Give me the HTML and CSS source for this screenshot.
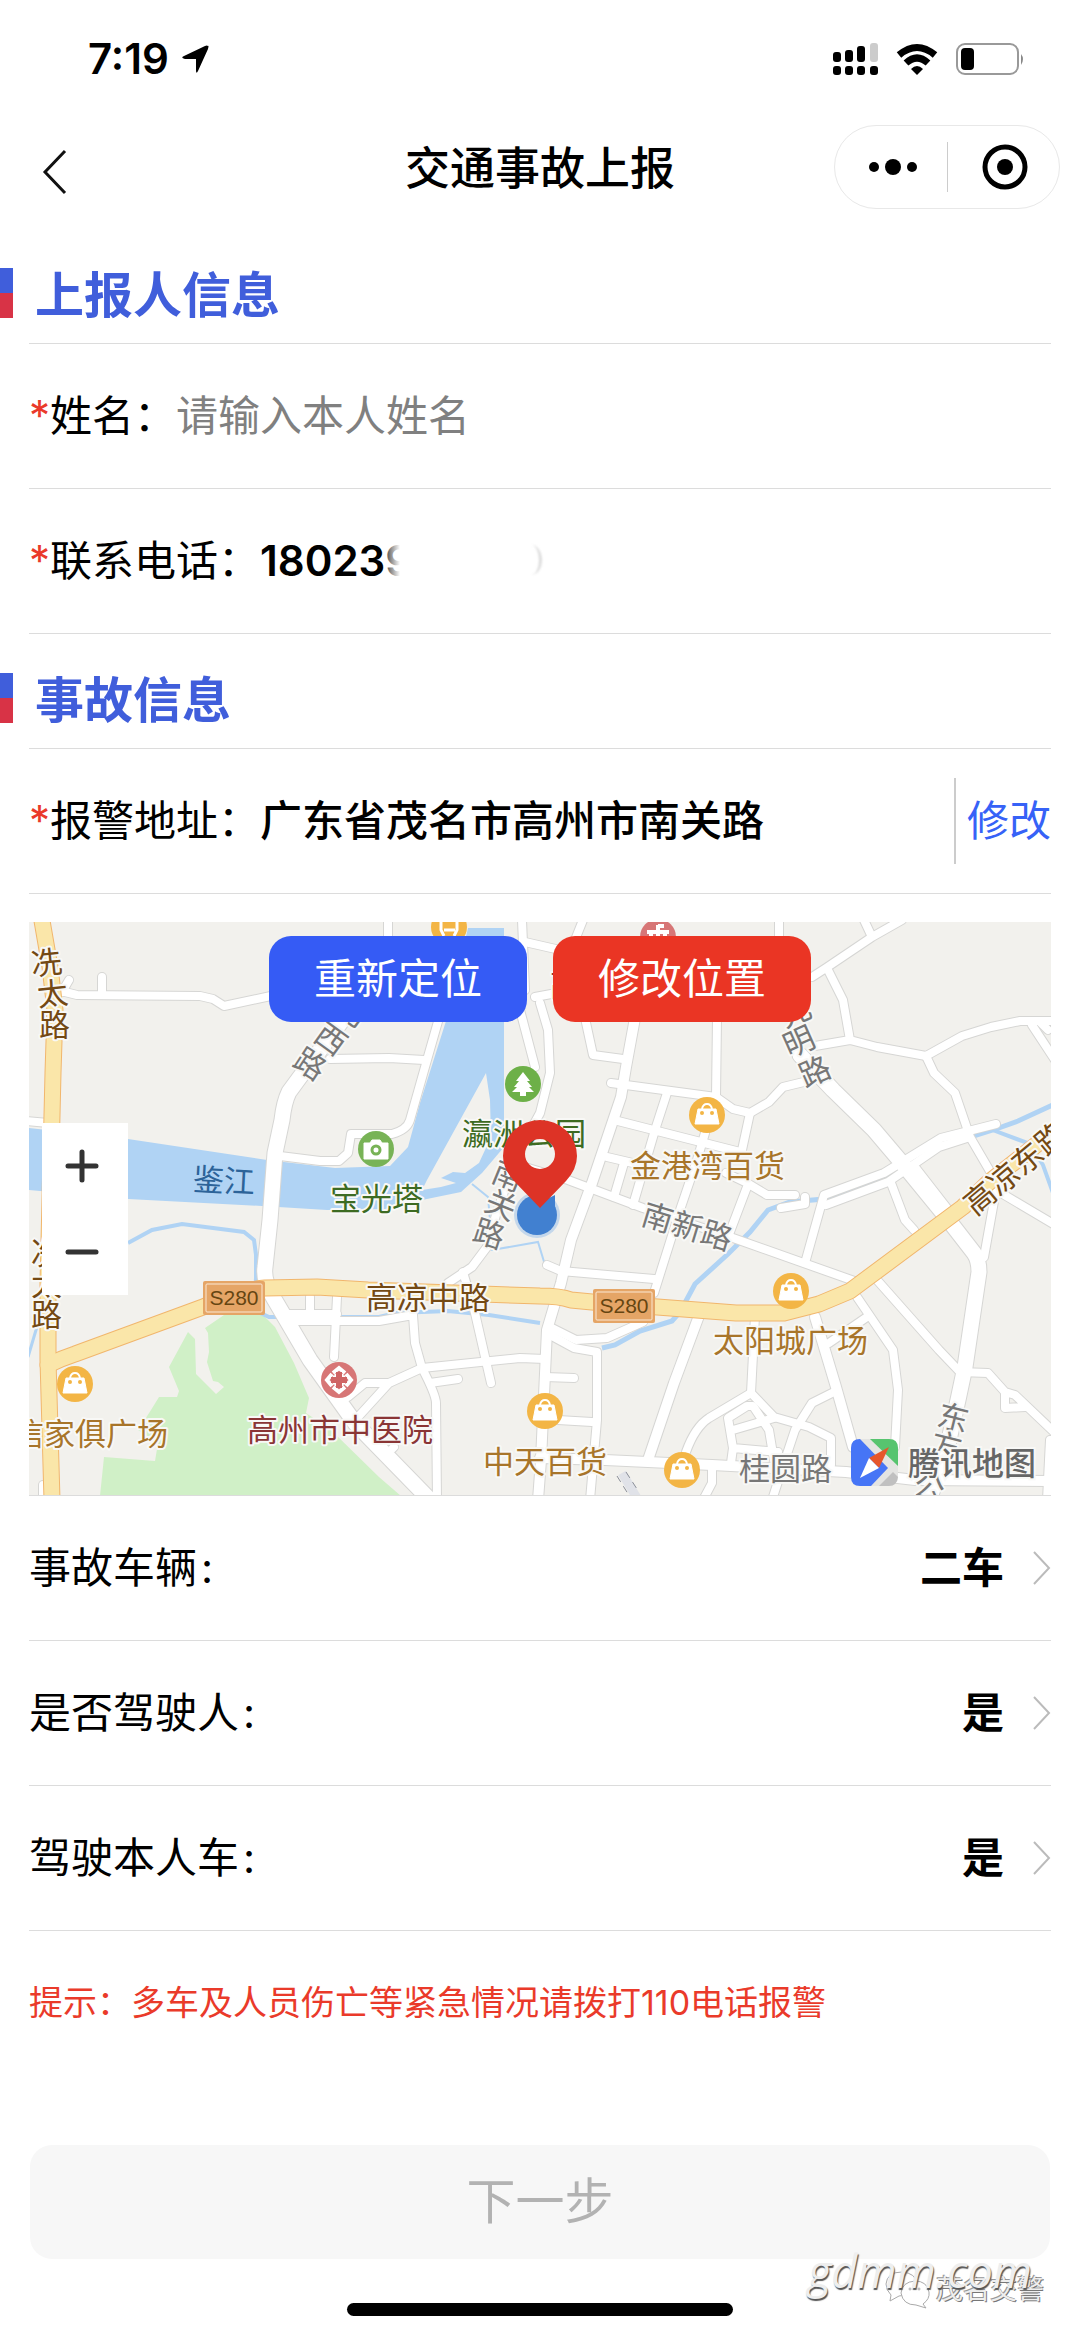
FILE: index.html
```html
<!DOCTYPE html>
<html lang="zh-CN">
<head>
  <meta charset="UTF-8" />
  <meta name="viewport" content="width=device-width, initial-scale=1.0" />
  <title>交通事故上报</title>
  <link rel="stylesheet" href="styles.css">
</head>
<body>
  <div class="status-bar">
    <div class="clock">
      <span>7:19</span>
      <svg width="28" height="28" viewBox="0 0 28 28"><path d="M27 1 Q28 0 27 4 L17 26 Q15 30 15 25 V14 H4 Q-1 13 3 11 L24 1 Q26 0 27 1Z"/></svg>
    </div>
    <div class="status-icons">
      <svg width="45" height="34" viewBox="0 0 45 34">
        <rect x="0" y="10" width="8" height="10" rx="3"/>
        <rect x="12" y="8" width="8" height="12" rx="3"/>
        <rect x="24" y="4" width="8" height="16" rx="3"/>
        <rect x="37" y="1" width="8" height="19" rx="3" fill="#ccc"/>
        <rect x="0" y="24" width="8" height="9" rx="3"/>
        <rect x="12" y="24" width="8" height="9" rx="3"/>
        <rect x="24" y="24" width="8" height="9" rx="3"/>
        <rect x="37" y="24" width="8" height="9" rx="3"/>
      </svg>
      <svg width="42" height="34" viewBox="0 0 42 34">
        <g fill="none" stroke="#000" stroke-width="7">
          <path d="M3 13 Q21 -2 39 13"/>
          <path d="M10 21 Q21 11 32 21"/>
        </g>
        <path d="M15 27 Q21 21 27 27 L21 33Z"/>
      </svg>
      <svg width="70" height="34" viewBox="0 0 70 34">
        <rect x="1" y="2" width="61" height="30" rx="8" fill="none" stroke="#999" stroke-width="2"/>
        <rect x="5" y="6" width="13" height="22" rx="4"/>
        <path d="M65 12 Q69 17 65 23Z" fill="#888"/>
      </svg>
    </div>
  </div>

  <header class="nav-bar">
    <button class="back" type="button" aria-label="返回">
      <svg width="26" height="46" viewBox="0 0 26 46"><path d="M23 2 L3 23 L23 44" fill="none" stroke="#111" stroke-width="3"/></svg>
    </button>
    <h1>交通事故上报</h1>
    <div class="capsule">
      <button type="button" aria-label="更多">
        <svg width="50" height="18" viewBox="0 0 50 18"><circle cx="6" cy="9" r="5"/><circle cx="25" cy="9" r="8"/><circle cx="44" cy="9" r="5"/></svg>
      </button>
      <button type="button" aria-label="关闭">
        <svg width="46" height="46" viewBox="0 0 46 46"><circle cx="23" cy="23" r="20" fill="none" stroke="#000" stroke-width="5"/><circle cx="23" cy="23" r="8"/></svg>
      </button>
    </div>
  </header>

  <form class="report-form">
    <h2>上报人信息</h2>
    <div class="row">
      <label for="name"><i>*</i>姓名：</label>
      <input type="text" id="name" name="name" placeholder="请输入本人姓名" />
    </div>
    <div class="row">
      <label for="phone"><i>*</i>联系电话：</label>
      <div class="phone-box">
        <input class="phone" type="tel" id="phone" name="phone" value="180239" />
        <span class="smudge"></span>
      </div>
    </div>

    <h2>事故信息</h2>
    <div class="row">
      <label for="address"><i>*</i>报警地址：</label>
      <input class="address" type="text" id="address" name="address" value="广东省茂名市高州市南关路" readonly />
      <a class="edit" href="#map">修改</a>
    </div>

    <div class="map" id="map">
      <svg class="map-canvas" viewBox="29 922 1022 573">
        <defs>
          <g id="minor">
            <path d="M65 992 L77 995 L200 996 L213 999 L224 1006 L280 994"/>
            <path d="M102 977 V992 M69 980 L62 992 M25 1121 L48 1123"/>
            <path d="M330 1059 L389 1058 L424 1060"/>
            <path d="M388 920 V945 M522 920 L525 990"/>
            <path d="M439 1018 L425 1067 L410 1120 Q407 1130 392 1134 L351 1134 L348 1153 L339 1161 L320 1161 L280 1156"/>
            <path d="M520 1010 L535 1067 M540 1003 L548 1030 L550 1073 L540 1113 L520 1150 L508 1180 L496 1215 L487 1247 L472 1267 L448 1283"/>
            <path d="M525 942 L560 950 M583 920 L573 945 M535 997 L562 992 M779 920 V945"/>
            <path d="M585 1018 L593 1055 L623 1059"/>
            <path d="M717 1018 L716 1097 L733 1109 L750 1113 L769 1102 L783 1087 L812 1080"/>
            <path d="M611 1083 L716 1097 M750 1113 L742 1150"/>
            <path d="M667 1093 L655 1130 L633 1205 M614 1120 L740 1152 M607 1157 L650 1167 M624 1163 L614 1197"/>
            <path d="M525 1167 L568 1180 L643 1208 L733 1238 L860 1283"/>
            <path d="M705 1133 L697 1160 L681 1207 L654 1293"/>
            <path d="M726 1173 L747 1183 L767 1195 H795 M747 1187 L728 1237"/>
            <path d="M805 1197 V1204 L781 1208"/>
            <path d="M805 1263 L824 1195 L884 1173 L941 1138 L996 1124"/>
            <path d="M826 1205 L888 1182 L939 1147 L967 1138"/>
            <path d="M812 977 L826 968 L872 937 L902 920 M864 920 L872 937"/>
            <path d="M827 968 L843 1000 L850 1040 M815 1046 L850 1040 L877 1047 L926 1056 L962 1036 L991 1027 L1020 1021 H1050 M1040 1022 L1048 1030"/>
            <path d="M1032 1025 L1055 1060"/>
            <path d="M926 1056 L934 1073 L955 1093 L970 1137 L991 1173 L996 1190 L1055 1225"/>
            <path d="M996 1190 L984 1257 M915 1167 L950 1212 M891 1183 L905 1220 L914 1230"/>
            <path d="M547 1265 L561 1271 L654 1279"/>
            <path d="M550 1327 L576 1340 L607 1338 L643 1322"/>
            <path d="M550 1335 L574 1348 L597 1352 V1420 L590 1500"/>
            <path d="M545 1377 L574 1378 M558 1420 L592 1422"/>
            <path d="M755 1316 L751 1393 L774 1417 L809 1427 L831 1438 V1465"/>
            <path d="M751 1393 L709 1418 Q695 1427 686 1452"/>
            <path d="M731 1463 L733 1448 L728 1418 L747 1406 H753 L769 1430 L774 1460 M733 1430 L774 1418 M733 1448 L778 1452"/>
            <path d="M834 1392 L812 1403 L795 1430 L786 1457 L772 1500"/>
            <path d="M712 1468 V1483 L703 1500"/>
            <path d="M857 1297 L893 1350 L898 1390 L895 1447 M867 1317 L829 1343"/>
            <path d="M877 1280 L939 1350 L960 1372 L988 1373 L1005 1392 L1015 1395 L1055 1433 M1005 1392 V1408 L1025 1407"/>
            <path d="M1050 1440 L1047 1500"/>
            <path d="M310 1297 V1314 M337 1297 L334 1357 M289 1314 H337"/>
            <path d="M293 1321 H379 L413 1315 L415 1343 L422 1368 Q436 1395 436 1403 L437 1500"/>
            <path d="M348 1397 L365 1383 H389 L422 1368 L520 1358 L545 1359 M389 1383 L358 1417 M430 1383 L458 1379"/>
            <path d="M463 1272 L475 1313 L491 1383 M389 1452 L394 1447"/>
            <path d="M43 1500 V1485"/>
          </g>
          <g id="middle">
            <path d="M635 1018 L626 1067 L621 1097 L592 1183 L571 1240 L561 1283 L547 1330 L541 1460 L538 1500"/>
            <path d="M700 1313 L674 1383 L648 1460"/>
            <path d="M815 1317 L836 1387 L853 1447"/>
            <path d="M540 1458 L605 1460 L712 1465 L846 1472 L915 1480 L1055 1481"/>
          </g>
          <g id="major">
            <path d="M344 1018 L300 1077 L289 1092 Q284 1102 282 1120 L275 1153 L270 1220 L265 1267 Q263 1280 273 1297 L310 1360 L355 1423 L432 1502"/>
            <path d="M800 1055 L833 1090 L874 1130 L902 1163 L943 1213 L974 1253 Q979 1260 979 1272 L965 1367 L958 1400 L946 1453 L929 1500"/>
          </g>
          <g id="highway">
            <path d="M41 915 L50 967 L55 1010 L53 1073 L48 1283 V1360 L52 1500"/>
            <path d="M48 1365 Q60 1359 75 1354 L203 1307 Q240 1290 265 1288 L317 1287 L368 1290 L540 1296 Q560 1296 571 1300 L592 1302 L736 1313 H784 L819 1304 L850 1291 L963 1207 L988 1183 L1055 1130"/>
          </g>
          <g id="bag">
            <circle r="18" fill="#f3b545"/>
            <path d="M-9 -6 H9 L12 9 H-12Z" fill="#fff" stroke="#fff" stroke-width="1" stroke-linejoin="round"/>
            <path d="M-5 -6 Q-4 -11 0 -11 Q4 -11 5 -6" fill="none" stroke="#fff" stroke-width="2"/>
            <circle cx="-5" cy="-2" r="2" fill="#f3b545"/><circle cx="5" cy="-2" r="2" fill="#f3b545"/>
          </g>
        </defs>

        <rect x="29" y="922" width="1022" height="573" fill="#f2f1ed"/>

        <!-- park and water -->
        <path fill="#d0f0c7" d="M224 1315 H263 L275 1327 L294 1363 L309 1398 L306 1413 L331 1430 L379 1477 L401 1496 H100 L104 1457 L155 1461 L158 1443 L138 1430 L151 1410 L159 1397 H177 L179 1391 L169 1367 L188 1332 L195 1339 L196 1374 L216 1394 L224 1387 L218 1382 L213 1381 L207 1362 L209 1352 L208 1333 L205 1328Z"/>
        <path fill="#b0d3f4" d="M28 1128 L128 1139 L267 1160 L335 1168 L390 1166 L408 1147 L420 1103 L446 1021 L468 928 H504 V1147 L482 1173 L461 1192 L422 1200 L385 1209 L327 1210 L262 1206 L128 1199 L28 1190Z"/>
        <path fill="#f2f1ed" d="M486 1073 L427 1180 L422 1190 L441 1187 L456 1183 L441 1178 L453 1172 L465 1173 L479 1163 L491 1137 L490 1100Z"/>
        <g class="stream">
          <path d="M472 1184 L488 1197 L490 1220 L485 1245 L492 1250 L538 1242 L545 1265" stroke-width="2"/>
          <path d="M128 1243 L152 1230 L182 1224 L244 1232 L254 1240 L256 1255 V1278 L254 1310 L269 1317 H379 L396 1313 L448 1311 L489 1315 L540 1323" stroke-width="4"/>
          <path d="M28 1357 L36 1330 L48 1290" stroke-width="3"/>
          <path d="M1055 1104 L1018 1121 L996 1129 L967 1138 L941 1142 L888 1178 L824 1199 L790 1202 L768 1210 L750 1232 L728 1254 L695 1284 L680 1312 L672 1321 L640 1331 L615 1345 L602 1348" stroke-width="5"/>
          <path d="M990 1129 L1030 1144 L1043 1165 L1053 1193" stroke-width="4"/>
        </g>

        <!-- roads: outline first, then the road itself -->
        <use href="#minor" class="road edge-minor"/>
        <use href="#middle" class="road edge-middle"/>
        <use href="#major" class="road edge-major"/>
        <use href="#minor" class="road fill-minor"/>
        <use href="#middle" class="road fill-middle"/>
        <use href="#major" class="road fill-major"/>
        <use href="#highway" class="road edge-highway"/>
        <use href="#highway" class="road fill-highway"/>

        <path d="M622 1473 L637 1498" stroke="#e0e2e8" stroke-width="9"/>
        <path d="M617 1476 L630 1497 M626 1472 L637 1489" stroke="#8b8f99" stroke-width="1" stroke-dasharray="7 5"/>

        <!-- places -->
        <use href="#bag" x="707" y="1115"/>
        <use href="#bag" x="75" y="1384"/>
        <use href="#bag" x="791" y="1291"/>
        <use href="#bag" x="545" y="1411"/>
        <use href="#bag" x="682" y="1470"/>
        <circle cx="449" cy="927" r="18" fill="#f3b545"/>
        <path d="M441 920 V930 L444 936 M444 930 H455 M457 920 V930 L454 936" fill="none" stroke="#fff" stroke-width="3"/>
        <circle cx="658" cy="937" r="18" fill="#d77676"/>
        <path d="M658 925 V936 M658 926 H664 M647 932 H669 M651 933 V942 M665 933 V942" stroke="#fff" stroke-width="4"/>
        <circle cx="376" cy="1149" r="18" fill="#78b356"/>
        <path d="M364 1143 H370 L372 1140 H380 L382 1143 H388 V1159 H364Z" fill="#fff" stroke="#fff" stroke-linejoin="round"/>
        <circle cx="376" cy="1150" r="4" fill="#fff" stroke="#78b356" stroke-width="3"/>
        <circle cx="523" cy="1084" r="18" fill="#6db048"/>
        <path d="M523 1072 L530 1081 H527 L532 1087 H529 L534 1092 H526 V1096 H520 V1092 H512 L517 1087 H514 L519 1081 H516Z" fill="#fff"/>
        <circle cx="339" cy="1380" r="18" fill="#d77676"/>
        <g fill="none" stroke="#fff" stroke-width="4">
          <path d="M333 1373 L339 1368 L345 1373 M346 1374 L351 1380 L346 1386 M345 1387 L339 1392 L333 1387 M332 1386 L327 1380 L332 1374"/>
        </g>
        <path d="M339 1374 V1386 M333 1380 H345" stroke="#fff" stroke-width="9"/>
        <path d="M339 1372 V1388 M331 1380 H347" stroke="#cf6464" stroke-width="6"/>

        <g class="badge">
          <rect x="203" y="1281" width="62" height="34" rx="2"/><rect class="inner" x="206" y="1284" width="56" height="28" rx="1"/>
          <text x="234" y="1305">S280</text>
          <rect x="593" y="1289" width="62" height="34" rx="2"/><rect class="inner" x="596" y="1292" width="56" height="28" rx="1"/>
          <text x="624" y="1313">S280</text>
        </g>

        <!-- labels -->
        <g class="names">
          <g class="street-main">
            <text x="31" y="974" transform="rotate(-6 47 962)">冼</text>
            <text x="37" y="1005" transform="rotate(-6 53 993)">太</text>
            <text x="39" y="1036">路</text>
            <text x="31" y="1264">冼</text>
            <text x="31" y="1295">太</text>
            <text x="31" y="1326">路</text>
            <text x="366" y="1309">高凉中路</text>
            <text x="964" y="1210" transform="rotate(-40 979 1198)">高凉东路</text>
          </g>
          <g class="street">
            <text x="338" y="1022" transform="rotate(36 353 1010)">河</text>
            <text x="316" y="1050" transform="rotate(36 331 1038)">西</text>
            <text x="295" y="1075" transform="rotate(33 310 1063)">路</text>
            <text x="493" y="1187" transform="rotate(22 508 1175)">南</text>
            <text x="486" y="1216" transform="rotate(22 501 1204)">关</text>
            <text x="474" y="1245" transform="rotate(18 489 1233)">路</text>
            <text x="779" y="1023" transform="rotate(-24 794 1011)">光</text>
            <text x="783" y="1053" transform="rotate(-24 798 1041)">明</text>
            <text x="799" y="1083" transform="rotate(-24 814 1071)">路</text>
            <text x="641" y="1238" transform="rotate(17 688 1226)">南新路</text>
            <text x="739" y="1480">桂圆路</text>
            <text x="938" y="1429" transform="rotate(14 953 1417)">东</text>
            <text x="931" y="1457" transform="rotate(14 946 1445)">方</text>
            <text x="914" y="1499" transform="rotate(14 929 1487)">公</text>
          </g>
          <text class="river" x="193" y="1192" transform="rotate(3 224 1180)">鉴江</text>
          <text class="park" x="330" y="1210">宝光塔</text>
          <text class="park" x="462" y="1145">瀛洲公园</text>
          <text class="shop" x="630" y="1177">金港湾百货</text>
          <text class="shop" x="713" y="1352">太阳城广场</text>
          <text class="shop" x="13" y="1445">信家俱广场</text>
          <text class="shop" x="483" y="1473">中天百货</text>
          <text class="hospital" x="247" y="1441">高州市中医院</text>
          <text class="hospital" x="550" y="996">高</text>
        </g>

        <!-- map logo -->
        <svg x="851" y="1439" width="47" height="47" viewBox="0 0 47 47">
          <rect width="47" height="47" rx="9" fill="#e4e4e2"/>
          <path d="M9 0 L37 29 L20 47 H9 Q0 47 0 38 V9 Q0 0 9 0Z" fill="#4675f6"/>
          <path d="M19 0 H38 Q47 0 47 9 V27Z" fill="#57c46f"/>
          <path d="M28 47 L42 33 L47 38 Q46 47 38 47Z" fill="#c0c0c0"/>
          <path d="M38 8 L18 19 L28 29Z" fill="#e6572c"/>
          <path d="M9 39 L18 19 L28 29Z" fill="#fff"/>
        </svg>
        <text class="brand" x="908" y="1475">腾讯地图</text>

        <!-- current position -->
        <circle cx="537" cy="1215" r="23" fill="#5a9be8" opacity="0.3"/>
        <circle cx="537" cy="1215" r="20" fill="#4180d0"/>
        <path d="M543 1201 L555 1195 V1208Z" fill="#4180d0"/>
        <path fill="#dd3326" fill-rule="evenodd" d="M540 1208 L514 1181 Q503 1169 503 1156 A37 36 0 0 1 577 1156 Q577 1169 566 1181Z M540 1139 A15 15 0 1 0 540 1169 A15 15 0 1 0 540 1139Z"/>
      </svg>
      <div class="map-actions">
        <button class="locate" type="button">重新定位</button>
        <button class="move" type="button">修改位置</button>
      </div>
      <div class="zoom">
        <button type="button" aria-label="放大"><svg width="34" height="34" viewBox="0 0 34 34"><path d="M3 17 H31 M17 3 V31"/></svg></button>
        <button type="button" aria-label="缩小"><svg width="34" height="34" viewBox="0 0 34 34"><path d="M3 17 H31"/></svg></button>
      </div>
    </div>

    <div class="row">
      <label for="cars">事故车辆<b>:</b></label>
      <select id="cars" name="cars"><option>二车</option><option>单车</option></select>
      <svg class="arrow" width="18" height="34" viewBox="0 0 18 34"><path d="M1 1 L16 17 L1 33"/></svg>
    </div>
    <div class="row">
      <label for="driver">是否驾驶人<b>:</b></label>
      <select id="driver" name="driver"><option>是</option><option>否</option></select>
      <svg class="arrow" width="18" height="34" viewBox="0 0 18 34"><path d="M1 1 L16 17 L1 33"/></svg>
    </div>
    <div class="row">
      <label for="own-car">驾驶本人车<b>:</b></label>
      <select id="own-car" name="own-car"><option>是</option><option>否</option></select>
      <svg class="arrow" width="18" height="34" viewBox="0 0 18 34"><path d="M1 1 L16 17 L1 33"/></svg>
    </div>

    <p class="tip">提示：多车及人员伤亡等紧急情况请拨打110电话报警</p>
    <button class="next" type="submit" disabled>下一步</button>
  </form>

  <footer>
    <div class="home-indicator"></div>
    <div class="account">
      <svg width="46" height="40" viewBox="0 0 46 40" fill="#fff" stroke="#aaa">
        <path d="M6 25 Q1 20 1 14 Q2 2 17 2 Q31 3 32 14 Q30 25 14 26 L5 31Z"/>
        <path d="M38 34 Q45 29 44 22 Q42 11 30 11 Q17 12 16 23 Q18 35 31 35 L41 38Z"/>
        <circle cx="25" cy="19" r="1"/><circle cx="34" cy="19" r="1"/>
      </svg>
      <span>茂名交警</span>
    </div>
    <div class="site">gdmm.com</div>
  </footer>
</body>
</html>
```
FILE: styles.css
```css
* { box-sizing: border-box; }
body { margin: 0; background: #fff; color: #000; font-family: Inter, "Noto Sans CJK SC", sans-serif; font-size: 42px; line-height: 60px; }
h1, h2, p { margin: 0; }
button, input, select { font: inherit; color: inherit; margin: 0; padding: 0; border: none; background: none; }
button { cursor: pointer; }
svg { display: block; }

/* status bar */
.status-bar { display: flex; justify-content: space-between; align-items: center; height: 118px; padding: 0 54px 0 88px; }
.clock { display: flex; align-items: center; gap: 12px; font-size: 42px; font-weight: 600; }
.status-icons { display: flex; align-items: center; gap: 18px; }

/* title bar */
.nav-bar { display: grid; grid-template-columns: 1fr auto 1fr; align-items: center; height: 97px; padding: 0 20px; margin-bottom: 14px; }
.nav-bar h1 { padding-top: 4px; font-size: 45px; font-weight: 500; }
.back { justify-self: start; padding: 10px 0 0 22px; }
.capsule { justify-self: end; display: flex; align-items: center; width: 226px; height: 84px; border: 1px solid #e8e8e8; border-radius: 42px; }
.capsule button { flex: 1; display: flex; align-items: center; justify-content: center; height: 50px; padding-left: 4px; }
.capsule button + button { border-left: 1px solid #ccc; }

/* form */
.report-form { padding: 0 29px; }
h2 { position: relative; height: 115px; padding: 37px 6px 0; border-bottom: 1px solid #dcdcdc; color: #405edb; font-size: 49px; font-weight: 700; }
h2::before { content: ""; position: absolute; left: -29px; top: 39px; width: 13px; height: 50px; background: linear-gradient(#405edb 50%, #d83346 50%); }
.row { display: flex; align-items: center; height: 145px; border-bottom: 1px solid #dcdcdc; }
.row label { white-space: nowrap; }
.row i { color: #ea3a2a; font-style: normal; }
.row b { padding-left: 4px; font-weight: 400; }
.row input { flex: 1; min-width: 0; height: 60px; outline: none; }
.row input::placeholder { color: #808080; opacity: 1; }
.row .phone { width: 100%; font-weight: 600; }
.row .address { font-weight: 500; }
.phone-box { position: relative; flex: 1; }
.smudge { position: absolute; left: 126px; top: 0; width: 160px; height: 60px; background: linear-gradient(90deg, rgba(255,255,255,0.3), #fff 14px); }
.smudge::after { content: ""; position: absolute; right: 4px; top: 14px; width: 18px; height: 30px; border-right: 3px solid #ddd; border-radius: 50%; filter: blur(1px); }
.edit { display: flex; align-items: center; height: 86px; padding-left: 11px; border-left: 2px solid #ccc; color: #3662f7; text-decoration: none; }
.row select { flex: 1; appearance: none; outline: none; text-align: right; text-align-last: right; font-weight: 700; opacity: 1; }
.arrow { margin-left: 29px; fill: none; stroke: #bbb; stroke-width: 2; }

/* map */
.map { position: relative; margin-top: 28px; border-bottom: 1px solid #dcdcdc; overflow: hidden; }
.map-canvas { width: 100%; height: auto; }
.map-actions { position: absolute; top: 14px; left: 0; right: 0; display: flex; justify-content: center; gap: 26px; color: #fff; }
.map-actions button { width: 258px; height: 86px; border-radius: 22px; }
.locate { background: #355bf5; }
.move { background: #ea3524; }
.zoom { position: absolute; left: 13px; top: 201px; display: flex; flex-direction: column; width: 86px; background: #fff; }
.zoom button { display: flex; align-items: center; justify-content: center; height: 86px; padding-right: 6px; }
.zoom path { fill: none; stroke: #333; stroke-width: 5; stroke-linecap: round; }
.stream { fill: none; stroke: #b0d3f4; }
.road { fill: none; stroke-linecap: round; stroke-linejoin: round; }
.edge-minor { stroke: #d6d6d4; stroke-width: 10px; }
.edge-middle { stroke: #d6d6d4; stroke-width: 12px; }
.edge-major { stroke: #d6d6d4; stroke-width: 17px; }
.edge-highway { stroke: #f1b66d; stroke-width: 17px; }
.fill-minor { stroke: #fff; stroke-width: 8px; }
.fill-middle { stroke: #fff; stroke-width: 10px; }
.fill-major { stroke: #fff; stroke-width: 15px; }
.fill-highway { stroke: #fae6a9; stroke-width: 15px; }
.names text { font-family: "Noto Sans CJK SC", sans-serif; font-size: 31px; stroke: #f8f8f6; stroke-width: 4px; stroke-linejoin: round; paint-order: stroke; }
.street-main { fill: #744913; }
.street { fill: #777; }
.names .river { fill: #2c6399; stroke: none; }
.park { fill: #3d6b22; }
.shop { fill: #a8752a; }
.hospital { fill: #8a3535; }
.badge rect { fill: #e5a566; }
.badge .inner { fill: none; stroke: #fbe8d4; stroke-width: 1px; }
.badge text { font-family: "Liberation Sans", sans-serif; font-size: 21px; fill: #654512; text-anchor: middle; }
.brand { font-size: 32px; font-weight: 500; fill: #666; stroke: #f8f8f6; stroke-width: 4px; paint-order: stroke; }

.tip { padding: 42px 0 0; color: #ea3a2a; font-size: 34px; }
.next { display: block; width: calc(100% - 2px); height: 114px; margin: 112px 1px 0; border-radius: 22px; background: #f7f7f7; color: #b2b2b2; font-size: 49px; }

/* bottom */
footer { position: relative; height: 78px; padding-top: 44px; }
.home-indicator { width: 386px; height: 13px; margin: 0 auto; border-radius: 7px; background: #000; }
.site { position: absolute; right: 48px; top: -18px; font: italic 45px/60px "Open Sans", sans-serif; color: #eee; text-shadow: 1px 2px 1px #555; }
.account { position: absolute; right: 36px; top: 11px; display: flex; align-items: center; gap: 5px; color: #eee; font-size: 27px; line-height: 40px; text-shadow: 1px 1px 0 #777, -1px -1px 0 #999; }
```
